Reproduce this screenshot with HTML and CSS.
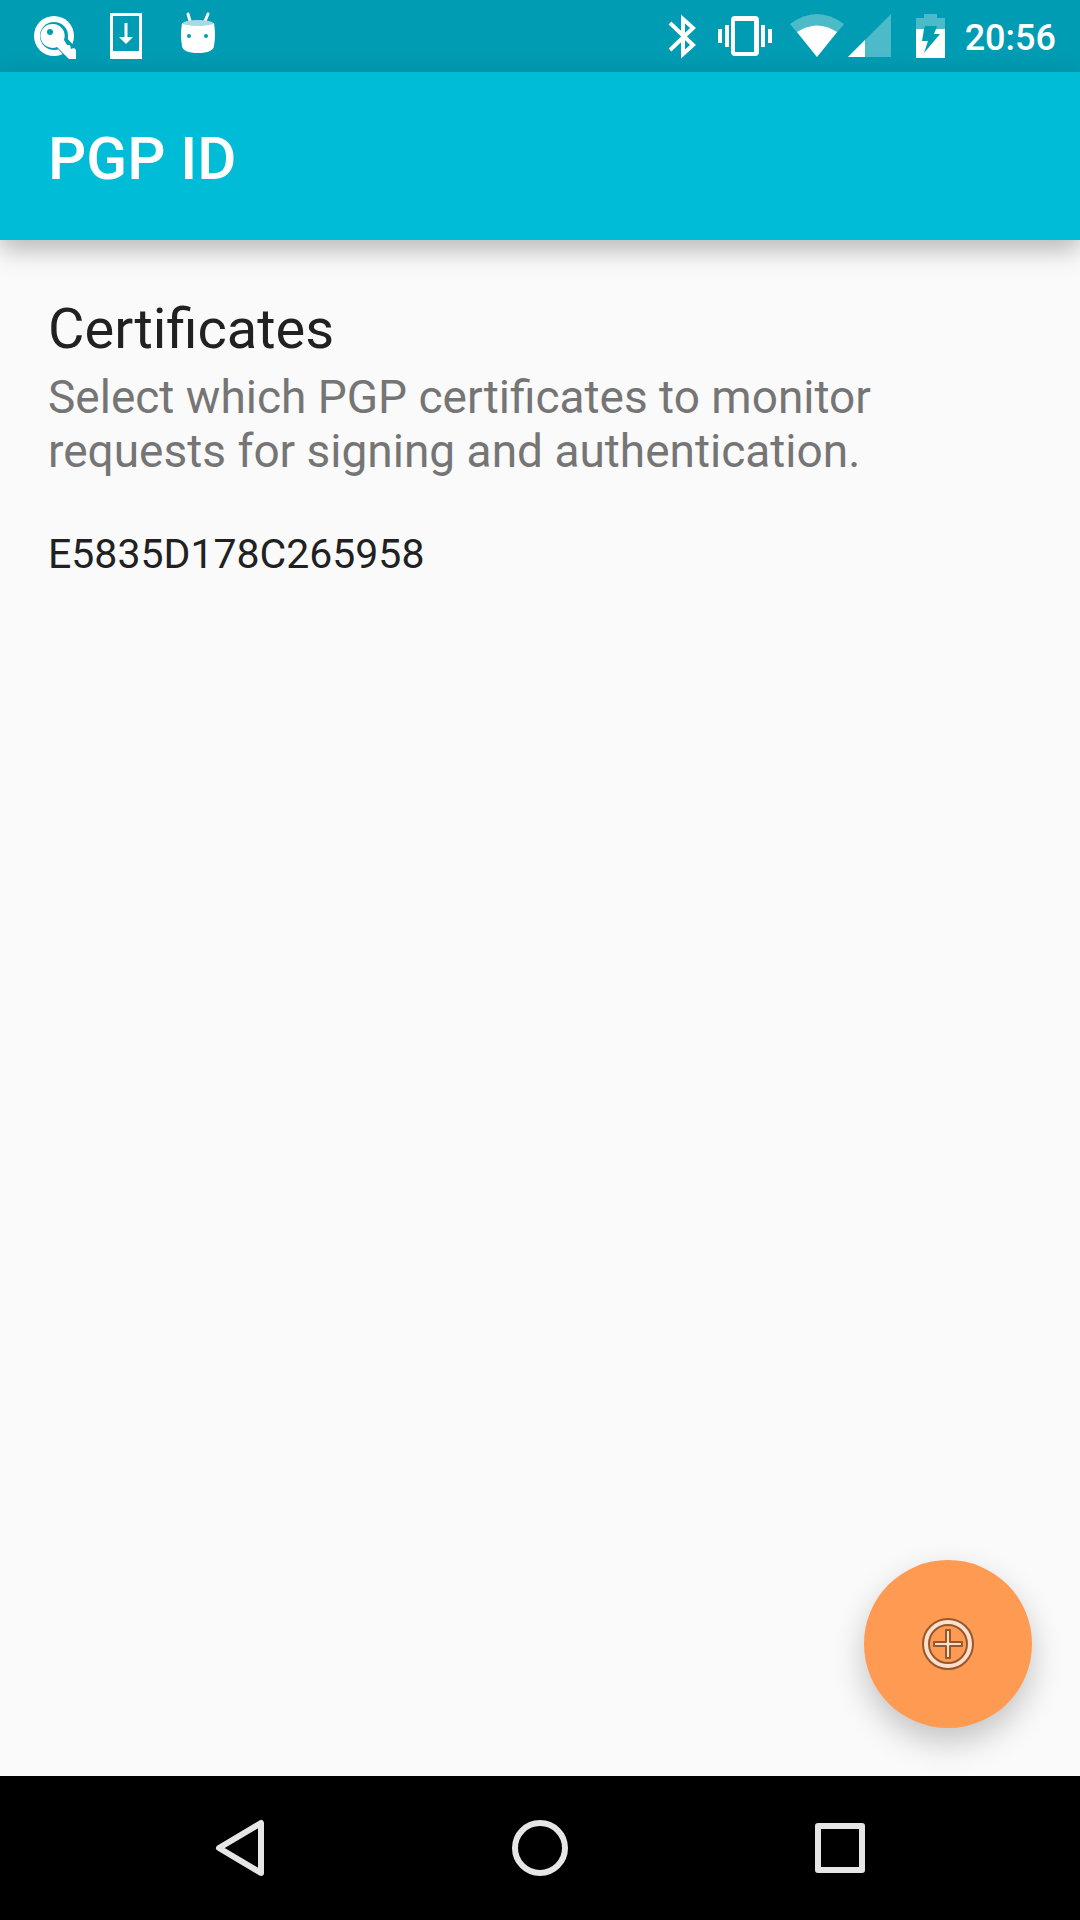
FILE: index.html
```html
<!DOCTYPE html>
<html lang="en">
<head>
<meta charset="utf-8">
<meta name="viewport" content="width=device-width, initial-scale=1">
<title>PGP ID</title>
<link rel="stylesheet" href="styles.css">
</head>
<body>
<div class="screen">
  <div class="status-bar">
    <div class="status-group">
      <svg class="status-icon" viewBox="18 0 72 72" aria-hidden="true">
        <circle cx="54" cy="36" r="20" fill="#fff"/>
        <circle cx="54" cy="36" r="14" fill="#009cb3"/>
        <path d="M62 43 L73 55" stroke="#009cb3" stroke-width="14"/>
        <path d="M54 24a12 12 0 1 0 3 23l12 12h7v-9l-2-2-3 1-1-4-3 0-3-5A12 12 0 0 0 54 24z" fill="#fff"/>
        <circle cx="50" cy="32" r="3" fill="#009cb3"/>
      </svg>
      <svg class="status-icon" viewBox="90 0 72 72" aria-hidden="true">
        <path fill="#fff" fill-rule="evenodd" d="M110 13h32v46h-32zM113 16v35h26V16z"/>
        <path fill="#fff" d="M124.500 23h3v14h5.500l-7 7-7-7h5.500z"/>
      </svg>
      <svg class="status-icon" viewBox="162 0 72 72" aria-hidden="true">
        <path d="M188 14l2 7M208 14l-3 7" stroke="#fff" stroke-width="3" stroke-linecap="round"/>
        <path fill="#fff" d="M182 23q16 5 32 0 2 12 0 23-1 7-16 7t-16-7q-2-11 0-23z"/>
        <ellipse cx="198" cy="23" rx="15" ry="3" fill="#a6dbe3"/>
        <circle cx="189" cy="36" r="2" fill="#009cb3"/>
        <circle cx="206" cy="36" r="2" fill="#009cb3"/>
      </svg>
    </div>
    <div class="status-group">
      <svg class="status-icon" viewBox="646 0 72 72" aria-hidden="true">
        <path d="M670 23l23 22-10 9V19l10 9-23 22" fill="none" stroke="#fff" stroke-width="4"/>
      </svg>
      <svg class="status-icon vibrate" viewBox="718 0 54 72" aria-hidden="true">
        <path fill="#fff" fill-rule="evenodd" d="M735 16h20q4 0 4 4v32q0 4-4 4h-20q-4 0-4-4V20q0-4 4-4zM735 21v31h19V21zM725 25h4v22h-4zM718 29h4v14h-4zM761 25h4v22h-4zM768 29h4v14h-4z"/>
      </svg>
      <svg class="status-icon wifi" viewBox="790 0 54 72" aria-hidden="true">
        <path fill="#fff" fill-opacity=".3" d="M790 24q27-20 54 0l-27 33z"/>
        <path fill="#fff" d="M797 32q20-13 40 0l-20 25z"/>
      </svg>
      <svg class="status-icon signal" viewBox="848 0 43 72" aria-hidden="true">
        <path fill="#fff" fill-opacity=".3" d="M891 14v43h-43z"/>
        <path fill="#fff" d="M865 40v17h-17z"/>
      </svg>
      <svg class="status-icon battery" viewBox="916 0 29 72" aria-hidden="true">
        <path fill="#fff" fill-opacity=".3" d="M924 14h13v4h8v11h-9l1-3h-12l-1 3h-8V18h8z"/>
        <path fill="#fff" fill-rule="evenodd" d="M916 29h29v29h-29zM924 29l-2 12h6l-4 12 16-19h-6l2-5z"/>
      </svg>
      <time class="clock">20:56</time>
    </div>
  </div>
  <header class="app-bar">
    <h1 class="app-title">PGP ID</h1>
  </header>
  <main class="content">
    <h2 class="section-title">Certificates</h2>
    <p class="section-text">Select which PGP certificates to monitor requests for signing and authentication.</p>
    <ul class="certificates">
      <li class="certificate">E5835D178C265958</li>
    </ul>
    <button class="fab" type="button" aria-label="Add certificate">
      <svg class="fab-icon" viewBox="0 0 56 56" aria-hidden="true">
        <circle cx="28" cy="28" r="22" fill="none" stroke="#94592f" stroke-width="8"/>
        <circle cx="28" cy="28" r="22" fill="none" stroke="#ffdfc9" stroke-width="4"/>
        <path d="M26 14h4v12h12v4H30v12h-4V30H14v-4h12z" fill="#ffdfc9" stroke="#94592f" stroke-width="2" stroke-linejoin="round"/>
      </svg>
    </button>
  </main>
  <nav class="nav-bar" aria-label="System">
    <button class="nav-button" type="button" aria-label="Back">
      <svg class="nav-icon" viewBox="0 0 60 60" aria-hidden="true"><path d="M51 5v50L9 30z"/></svg>
    </button>
    <button class="nav-button" type="button" aria-label="Home">
      <svg class="nav-icon" viewBox="0 0 60 60" aria-hidden="true"><circle cx="30" cy="30" r="25"/></svg>
    </button>
    <button class="nav-button" type="button" aria-label="Recent apps">
      <svg class="nav-icon" viewBox="0 0 60 60" aria-hidden="true"><path d="M8 8h44v44H8z"/></svg>
    </button>
  </nav>
</div>
</body>
</html>
```
FILE: styles.css
```css
* {
  box-sizing: border-box;
}

body,
h1,
h2,
p,
ul {
  margin: 0;
  padding: 0;
}

body {
  background: #fafafa;
  color: #212121;
  font-family: Roboto, sans-serif;
}

button {
  border: 0;
  padding: 0;
  background: none;
}

.screen {
  display: flex;
  flex-direction: column;
  min-height: 100vh;
}

.status-bar {
  display: flex;
  justify-content: space-between;
  height: 72px;
  padding: 0 24px 0 18px;
  background: #009cb3;
  color: #fff;
}

.status-group {
  display: flex;
  align-items: center;
}

.status-icon {
  display: block;
  width: 72px;
  height: 72px;
}

.vibrate {
  width: 54px;
  margin-right: 18px;
}

.wifi {
  width: 54px;
  margin-right: 4px;
}

.signal {
  width: 43px;
  margin-right: 25px;
}

.battery {
  width: 29px;
  margin-right: 20px;
}

.clock {
  padding-top: 4px;
  font-size: 36px;
  font-weight: 500;
  line-height: 42px;
}

.app-bar {
  position: relative;
  padding: 51px 48px 45px;
  background: #00bcd6;
  color: #fff;
  box-shadow: 0 9px 24px rgba(0, 0, 0, 0.28);
}

.app-title {
  font-size: 60px;
  font-weight: 500;
  line-height: 72px;
}

.content {
  position: relative;
  flex: 1;
  padding: 56px 48px 264px;
}

.section-title {
  font-size: 56px;
  font-weight: 400;
  line-height: 66px;
}

.section-text {
  max-width: 860px;
  padding-top: 8px;
  color: #757575;
  font-size: 46px;
  line-height: 54px;
}

.certificates {
  padding-top: 52px;
  list-style: none;
}

.certificate {
  font-size: 41px;
  line-height: 48px;
}

.fab {
  position: absolute;
  right: 48px;
  bottom: 48px;
  display: flex;
  align-items: center;
  justify-content: center;
  width: 168px;
  height: 168px;
  border-radius: 50%;
  background: #ff9a52;
  box-shadow: 0 14px 32px rgba(0, 0, 0, 0.22);
}

.fab-icon {
  width: 56px;
  height: 56px;
}

.nav-bar {
  display: grid;
  grid-template-columns: repeat(3, 1fr);
  height: 144px;
  padding: 0 90px;
  background: #000;
}

.nav-button {
  display: flex;
  align-items: center;
  justify-content: center;
}

.nav-icon {
  width: 60px;
  height: 60px;
  fill: none;
  stroke: #e6e6e6;
  stroke-width: 6px;
  stroke-linejoin: round;
}
```
